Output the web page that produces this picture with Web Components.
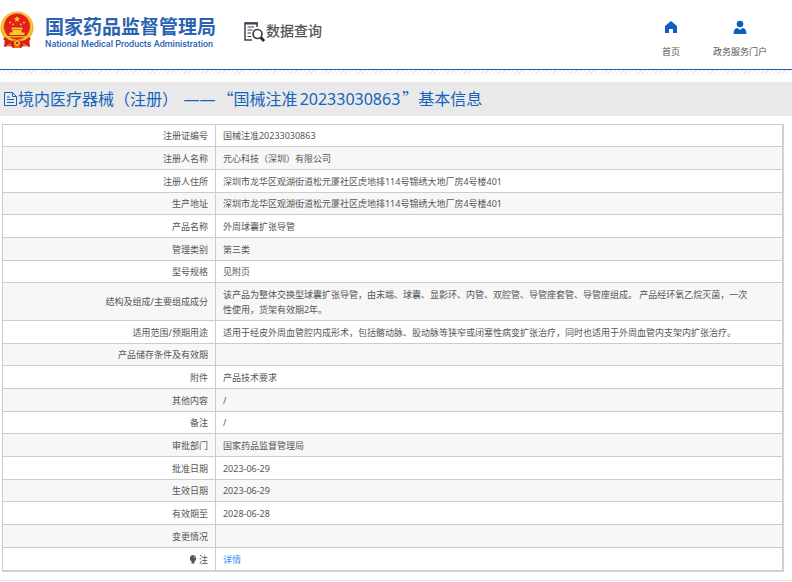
<!DOCTYPE html>
<html lang="zh-CN">
<head>
<meta charset="utf-8">
<title>国家药品监督管理局 数据查询</title>
<style>
body{margin:0;background:#fff;color:#555;font:9px/15px "Noto Sans","Noto Sans CJK SC",sans-serif}
</style>
</head>
<body>
<nmpa-page></nmpa-page>
<script>
const define=(name,html)=>customElements.define(name,class extends HTMLElement{
  constructor(){
    super();
    const t=document.createElement('template');
    t.innerHTML=html;
    this.attachShadow({mode:'open'}).append(t.content.cloneNode(true));
  }
});

define('nmpa-emblem',`
<style>:host{display:block;width:34px;height:38px}svg{display:block}</style>
<svg width="34" height="38" viewBox="0 0 34 38" aria-hidden="true">
  <path d="M5 27L29 27L30 36L24 34L21 37H13L10 34L4 36Z" fill="#d8201c"/>
  <ellipse cx="17" cy="16.500" rx="16.500" ry="16" fill="#f2b21d"/>
  <ellipse cx="17" cy="16" rx="14.800" ry="14.300" fill="none" stroke="#f9d33b" stroke-width="1"/>
  <circle cx="17" cy="15.500" r="13" fill="#e2201b"/>
  <path d="M17 5l.9 2.100 2.300.2-1.800 1.500.6 2.300-2-1.300-2 1.300.6-2.300-1.800-1.500 2.300-.2z" fill="#f8c92a"/>
  <g fill="#f8c92a"><circle cx="10" cy="11.500" r=".9"/><circle cx="24" cy="11.500" r=".9"/><circle cx="13" cy="13.500" r=".9"/><circle cx="21" cy="13.500" r=".9"/>
  <path d="M12 16.500h10l1 2H11zM12.500 19h9v2.500h-9zM9.500 21.500h15v2.500h-15z"/><path d="M8 25h18v1.500H8z" opacity=".8"/></g>
  <path d="M4 27Q10 33 16 30Q15 34 10 34L5 34M30 27Q24 33 18 30Q19 34 24 34L29 34" fill="none" stroke="#d8201c" stroke-width="2.500"/>
  <circle cx="17" cy="32" r="3" fill="#f3b622"/><circle cx="17" cy="32" r="1.200" fill="#d8201c"/>
  <path d="M7 35l4-2M23 33l4 2M14 36h6" stroke="#f3b622"/>
</svg>`);

define('nmpa-brand',`
<style>
:host{display:flex;align-items:flex-start;gap:11px;color:#2d62b3}
h1{margin:0;font:bold 19px/25px "Noto Sans CJK SC",sans-serif}
p{margin:0;font:9px/13px "Roboto","Liberation Sans",sans-serif;font-weight:500;white-space:nowrap}
div{padding-top:2px}
</style>
<nmpa-emblem></nmpa-emblem>
<div><h1>国家药品监督管理局</h1><p>National Medical Products Administration</p></div>`);

define('query-label',`
<style>
:host{display:flex;align-items:flex-start;gap:1px;color:#555;font:14px/20px "Noto Sans CJK SC",sans-serif;font-weight:500}
svg{margin-top:2px}
</style>
<svg width="21" height="21" viewBox="0 0 21 21" fill="none" stroke="#41414f" stroke-width="1.500" aria-hidden="true">
  <path d="M13 5V1H1V18H8"/><path d="M1 1.500H14" stroke-width="2"/><path d="M3.500 5H10M3.500 8H8.500M3.500 11H7M3.500 14.500H7" stroke-width="1.200"/>
  <circle cx="13.500" cy="12" r="4.500" stroke-width="1.700"/><path d="M16.800 15.300L20 19" stroke-width="2.800" stroke="#25252d"/>
</svg><span><slot></slot></span>`);

define('nav-link',`
<style>
:host{display:block}
a{display:flex;flex-direction:column;align-items:center;gap:9px;color:inherit;text-decoration:none;white-space:nowrap}
::slotted(svg){display:block}
</style>
<a href="#"><slot name="icon"></slot><span><slot></slot></span></a>`);

define('site-header',`
<style>
:host{display:block}
header{display:flex;align-items:flex-start;height:69px;box-sizing:border-box;padding:11px 25px 0 0}
query-label{margin:9px 0 0 28px}
nav{display:flex;gap:33px;margin:9px 0 0 auto}
.rule{height:5px;box-sizing:border-box;border-top:1px solid #1262b3;background:repeating-linear-gradient(135deg,#e8e8e8 0 1px,#fff 1px 3px)}
</style>
<header>
  <nmpa-brand></nmpa-brand>
  <query-label>数据查询</query-label>
  <nav>
    <nav-link><svg slot="icon" width="14" height="15" viewBox="0 0 14 15" aria-hidden="true"><path d="M7 1L13 6V13H9V9H5V13H1V6Z" fill="#0a5fc2"/></svg>首页</nav-link>
    <nav-link><svg slot="icon" width="14" height="15" viewBox="0 0 14 15" aria-hidden="true"><circle cx="7" cy="4" r="3.300" fill="#0a5fc2"/><path d="M.5 14Q.5 8.500 4.500 8L7 10L9.500 8Q13.500 8.500 13.500 14Z" fill="#0a5fc2"/></svg>政务服务门户</nav-link>
  </nav>
</header>
<div class="rule"></div>`);

define('page-title',`
<style>
:host{display:block;margin-top:8px;background:#e9e9e9;color:#1464bb}
h2{display:flex;align-items:center;gap:1px;margin:0;padding:4px 4px 5px 4px;font:16px/24px "Noto Sans CJK SC",sans-serif}
::slotted(span){padding:0 2px;font-family:"Noto Sans","Noto Sans CJK SC",sans-serif}
</style>
<h2><svg width="13" height="14" viewBox="0 0 13 14" fill="none" stroke="currentColor" aria-hidden="true"><path d="M.5.5H8.500L12.500 4.500V13.500H.5ZM8.500.5V4.500H12.500M3 5H6M3 7.500H10M3 10.500H10"/></svg><span><slot></slot></span></h2>`);

const rows=[
['注册证编号','国械注准20233030863'],
['注册人名称','元心科技（深圳）有限公司'],
['注册人住所','深圳市龙华区观湖街道松元厦社区虎地排114号锦绣大地厂房4号楼401'],
['生产地址','深圳市龙华区观湖街道松元厦社区虎地排114号锦绣大地厂房4号楼401'],
['产品名称','外周球囊扩张导管'],
['管理类别','第三类'],
['型号规格','见附页'],
['结构及组成/主要组成成分','该产品为整体交换型球囊扩张导管，由末端、球囊、显影环、内管、双腔管、导管座套管、导管座组成。 产品经环氧乙烷灭菌，一次性使用，货架有效期2年。'],
['适用范围/预期用途','适用于经皮外周血管腔内成形术，包括髂动脉、股动脉等狭窄或闭塞性病变扩张治疗，同时也适用于外周血管内支架内扩张治疗。'],
['产品储存条件及有效期',''],
['附件','产品技术要求'],
['其他内容','/'],
['备注','/'],
['审批部门','国家药品监督管理局'],
['批准日期','2023-06-29'],
['生效日期','2023-06-29'],
['有效期至','2028-06-28'],
['变更情况',''],
['<svg width="8" height="9" viewBox="0 0 8 9" aria-hidden="true"><path d="M4 0A3.300 3.300 0 0 1 5.500 6.200V8.500H2.500V6.200A3.300 3.300 0 0 1 4 0Z" fill="#555"/><path d="M5 1.500L6 3" stroke="#ddd"/></svg>注','<a href="#">详情</a>']
];
define('record-table',`
<style>
:host{display:block;margin:8px 8px 0 2px;border-right:1px solid #d4d4e0;border-bottom:1px solid #d4d4e0}
table{width:100%;border-collapse:collapse;table-layout:fixed}
col:first-child{width:27.300%}
th,td{height:23px;box-sizing:border-box;padding:3px 7px;border:1px solid #ccc;vertical-align:middle;font-weight:400;text-align:left}
tr:nth-child(3n+1):not(:last-child)>*{height:22px}
tr:nth-child(8)>*{height:38px}
th{text-align:right}
td{padding-right:30px}
tr:nth-child(even){background:#f7f7f7}
a{color:#3094f5;text-decoration:none}
svg{vertical-align:-1px;margin-right:2px}
</style>
<table><colgroup><col><col></colgroup><tbody>${rows.map(([k,v])=>`<tr><th scope="row">${k}</th><td>${v}</td></tr>`).join('')}</tbody></table>`);

define('nmpa-page',`
<style>
:host{display:block}
footer{margin-top:8px;border-top:1px solid #e6e6e6}
</style>
<site-header></site-header>
<main>
<page-title>境内医疗器械（注册） <span>——</span>“国械注准<span>20233030863</span>”基本信息</page-title>
<record-table></record-table>
</main>
<footer></footer>`);
</script>
</body>
</html>
